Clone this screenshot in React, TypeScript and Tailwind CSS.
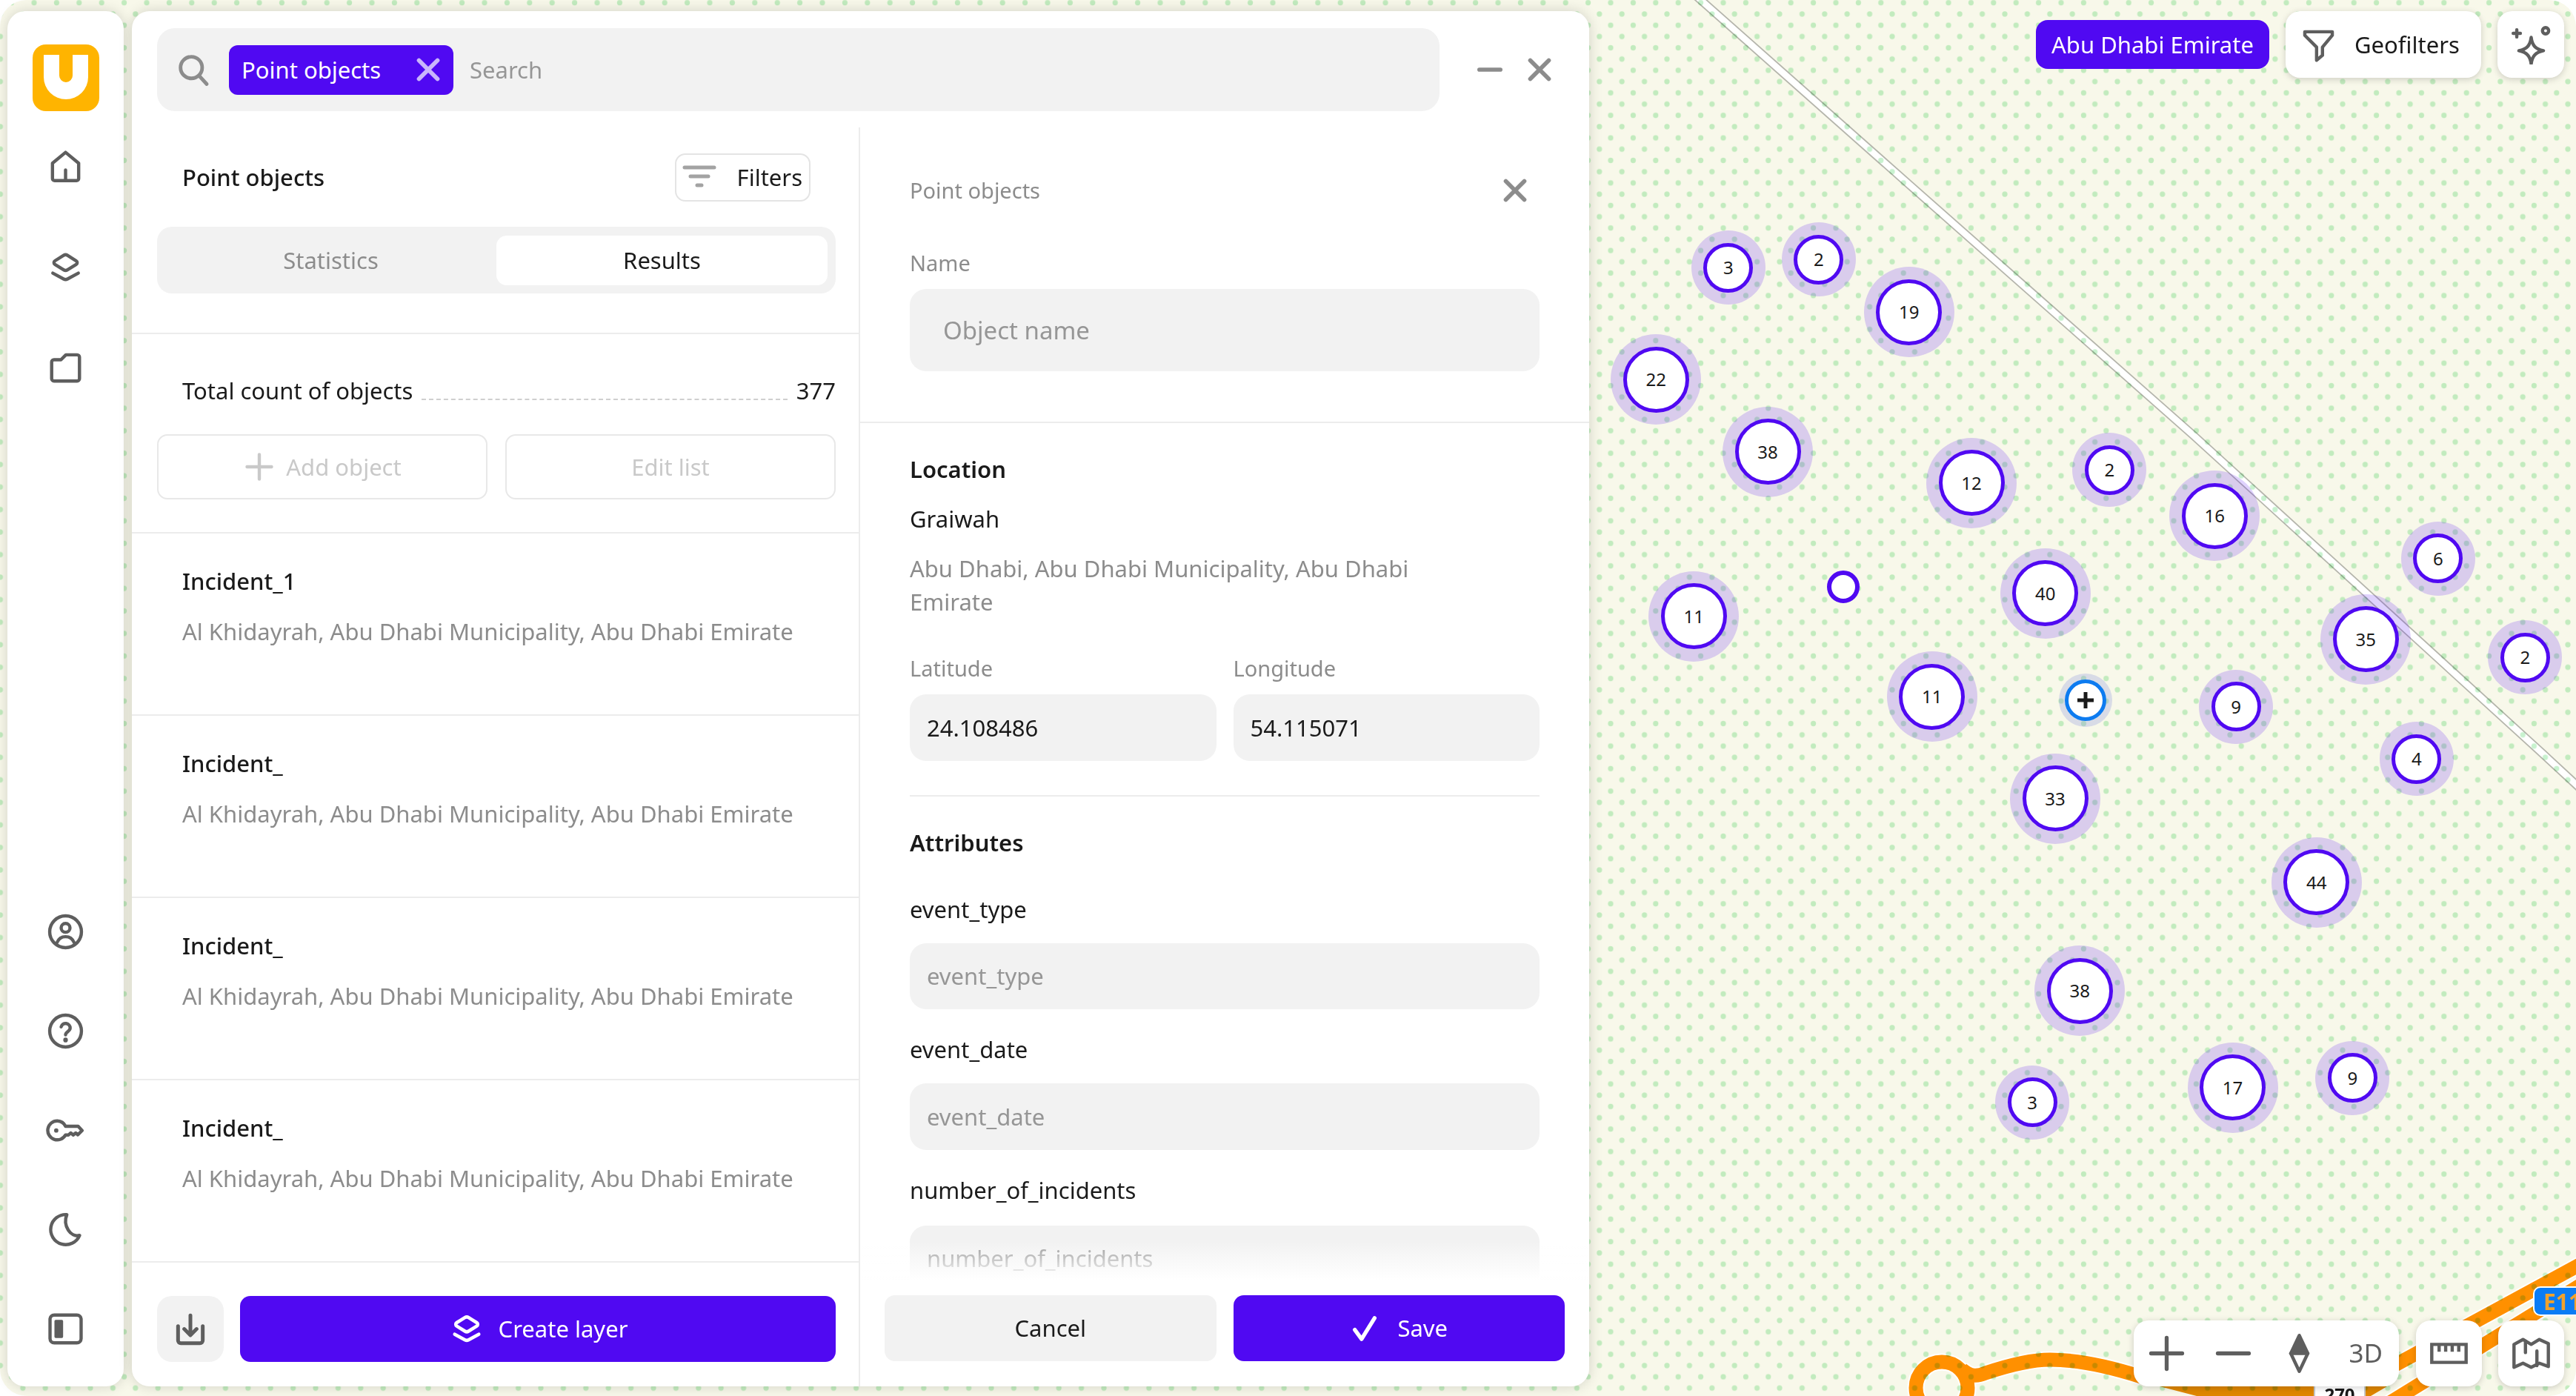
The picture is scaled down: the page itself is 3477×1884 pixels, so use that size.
import React from "react";

const PURPLE = "#5009f2";

type Cluster = [number, number, string, "L" | "S"];
const clusters: Cluster[] = [
  [1052, 163, "3", "S"], [1107, 158, "2", "S"], [1162, 190, "19", "L"], [1008, 231, "22", "L"],
  [1076, 275, "38", "L"], [1200, 294, "12", "L"], [1284, 286, "2", "S"], [1348, 314, "16", "L"],
  [1484, 340, "6", "S"], [1245, 361, "40", "L"], [1031, 375, "11", "L"], [1440, 389, "35", "L"],
  [1537, 400, "2", "S"], [1176, 424, "11", "L"], [1361, 430, "9", "S"], [1471, 462, "4", "S"],
  [1251, 486, "33", "L"], [1410, 537, "44", "L"], [1266, 603, "38", "L"], [1359, 662, "17", "L"],
  [1432, 656, "9", "S"], [1237, 671, "3", "S"],
];
const K = 2.2175;

function Svg({ size = 53, className = "", children, sw = 2, color = "#5e5e5e" }: { size?: number; className?: string; children: React.ReactNode; sw?: number; color?: string }) {
  return (
    <svg width={size} height={size} viewBox="0 0 24 24" fill="none" stroke={color} strokeWidth={sw} strokeLinecap="round" strokeLinejoin="round" className={"shrink-0 " + className}>
      {children}
    </svg>
  );
}

const LayersPaths = () => (
  <>
    <path d="M10.8 4.4a2.2 2.2 0 0 1 2.4 0l5.3 3.3a1.3 1.3 0 0 1 0 2.2L13.2 13.2a2.2 2.2 0 0 1-2.4 0L5.5 9.9a1.3 1.3 0 0 1 0-2.2z" />
    <path d="M4.2 15.2l6.6 3.6a2.5 2.5 0 0 0 2.4 0l6.6-3.6" />
  </>
);

const XIcon = ({ color = "#8c8c8c", size = 40 }: { color?: string; size?: number }) => (
  <Svg size={size} color={color} sw={3.4}>
    <path d="M4.5 4.5l15 15M19.5 4.5l-15 15" />
  </Svg>
);

function NavButton({ children }: { children: React.ReactNode }) {
  return <div className="flex h-[89px] w-[89px] items-center justify-center">{children}</div>;
}

function Input({ text, dark, h = "h-[89.5px]", pad = "px-[23px]", big }: { text: string; dark?: boolean; h?: string; pad?: string; big?: boolean }) {
  return (
    <div className={`flex items-center rounded-[22px] bg-[#f2f2f2] ${h} ${pad} ${big ? "text-[33px]" : "text-[31px]"} ${dark ? "text-[#1a1a1a]" : "text-[#969696]"}`}>
      {text}
    </div>
  );
}

function ListItem({ title }: { title: string }) {
  return (
    <div className="h-[246px] border-b-2 border-[#ececec] pl-[68px] pr-[65px] pt-[42px]">
      <div className="text-[31px] font-medium leading-[45px] text-[#1a1a1a]">{title}</div>
      <div className="mt-[23px] text-[31px] leading-[45px] text-[#8c8c8c]">Al Khidayrah, Abu Dhabi Municipality, Abu Dhabi Emirate</div>
    </div>
  );
}

function MapCanvas() {
  return (
    <div className="absolute inset-0 overflow-hidden rounded-[36px] bg-[#f8f8ea]">
      <svg width={3477} height={1884} className="absolute inset-0">
        <defs>
          <pattern id="dots" width="30.4" height="30.4" patternUnits="userSpaceOnUse" patternTransform="translate(0.4 18.9)">
            <circle cx="0" cy="0" r="3.6" fill="#c8f2cf" />
            <circle cx="30.4" cy="0" r="3.6" fill="#c8f2cf" />
            <circle cx="0" cy="30.4" r="3.6" fill="#c8f2cf" />
            <circle cx="30.4" cy="30.4" r="3.6" fill="#c8f2cf" />
            <circle cx="15.2" cy="15.2" r="3.6" fill="#c8f2cf" />
          </pattern>
        </defs>
        {/* motorway */}
        <path d="M2290 -5L2578 250L2960 587L3433 1018L3500 1080" fill="none" stroke="#b5b5ac" strokeWidth="12" />
        <path d="M2290 -5L2578 250L2960 587L3433 1018L3500 1080" fill="none" stroke="#ffffff" strokeWidth="8.5" />
        {/* orange roads */}
        <g fill="none" stroke="#ffffff" strokeWidth="23">
          <circle cx="2621" cy="1873" r="35" />
          <path d="M2648 1848C2660 1858 2668 1858 2680 1853C2710 1843 2740 1835 2767 1835C2800 1835 2840 1842 2890 1858" />
          <path d="M3200 1860L3500 1697" />
          <path d="M3190 1915L3500 1724" />
        </g>
        <g fill="none" stroke="#ff9000" strokeWidth="19">
          <circle cx="2621" cy="1873" r="35" />
          <path d="M2648 1848C2660 1858 2668 1858 2680 1853C2710 1843 2740 1835 2767 1835C2800 1835 2840 1842 2890 1858" />
          <path d="M3200 1860L3500 1697" />
          <path d="M3190 1915L3500 1724" />
        </g>
        <path d="M2915 1871H3222L3200 1884H2965Z" fill="#df8600" />
        <rect x="0" y="0" width="3477" height="1884" fill="url(#dots)" className="mix-blend-multiply" />
      </svg>
      <div className="absolute left-[3419px] top-[1736px] flex h-[40px] w-[70px] items-center rounded-[10px] border-2 border-white bg-[#0a7cf5] pl-[12px] text-[30px] font-bold text-[#f2a22c]">E11</div>
      <div className="absolute left-[3123px] top-[1860px] flex h-[40px] w-[70px] items-start justify-center rounded-[10px] border-2 border-[#c8c8c8] bg-white pt-[2px] text-[24px] font-bold text-[#1a1a1a]">270</div>
      {clusters.map(([x, y, label, kind], i) => {
        const outer = kind === "L" ? 122 : 100;
        return (
          <div
            key={i}
            className="absolute flex items-center justify-center rounded-full bg-[rgba(80,9,242,0.185)]"
            style={{ left: x * K - outer / 2, top: y * K - outer / 2, width: outer, height: outer }}
          >
            <div className={`flex items-center justify-center rounded-full border-[5.5px] border-[#5009f2] bg-white text-[24px] text-[#1a1a1a] ${kind === "L" ? "h-[89px] w-[89px]" : "h-[67px] w-[67px]"}`}>
              {label}
            </div>
          </div>
        );
      })}
      <div className="absolute left-[2465.5px] top-[770px] h-[44px] w-[44px] rounded-full border-[6px] border-[#5009f2] bg-white" />
      <div className="absolute left-[2778.5px] top-[908.5px] flex h-[72px] w-[72px] items-center justify-center rounded-full bg-[rgba(120,130,220,0.25)]">
        <div className="flex h-[56px] w-[56px] items-center justify-center rounded-full border-[5px] border-[#0d7bf0] bg-white">
          <svg width="24" height="24" viewBox="0 0 24 24" stroke="#1a1a1a" strokeWidth="5" strokeLinecap="butt">
            <path d="M12 1v22M1 12h22" />
          </svg>
        </div>
      </div>
    </div>
  );
}

export default function App() {
  return (
    <div className="relative h-[1884px] w-[3477px] overflow-hidden bg-white font-['Noto_Sans',sans-serif] text-[#1a1a1a]">
      <MapCanvas />
      <div className="relative flex h-full pb-[13px] pl-[10px] pt-[15px]">
        {/* nav rail */}
        <nav className="flex w-[157px] shrink-0 flex-col items-center rounded-[24px] bg-white pb-[33px] pt-[45px] shadow-[0_0_18px_rgba(0,0,0,0.16)]">
          <svg width="90" height="90" viewBox="0 0 90 90">
            <rect width="90" height="90" rx="18" fill="#ffb400" />
            <path d="M15 14H36V42a9 9 0 0 0 18 0V14H75V44a30 30 0 0 1-60 0Z" fill="#fff" />
          </svg>
          <div className="mt-[31px] flex flex-col gap-[46.5px]">
            <NavButton>
              <Svg><path d="M12 3l8 6.6V19a1.3 1.3 0 0 1-1.3 1.3H5.3A1.3 1.3 0 0 1 4 19V9.6z" /><path d="M12 20v-6.2" /></Svg>
            </NavButton>
            <NavButton><Svg><LayersPaths /></Svg></NavButton>
            <NavButton>
              <Svg><path d="M3.5 8.4A1.4 1.4 0 0 1 4.9 7H9.2l3-3h6.9a1.4 1.4 0 0 1 1.4 1.4v13.2a1.4 1.4 0 0 1-1.4 1.4H4.9a1.4 1.4 0 0 1-1.4-1.4z" /></Svg>
            </NavButton>
          </div>
          <div className="mt-auto flex flex-col gap-[45px]">
            <NavButton>
              <Svg><circle cx="12" cy="12" r="9.7" /><circle cx="12" cy="9.6" r="2.7" /><path d="M6.8 18.6c1-2.6 3-3.6 5.2-3.6s4.2 1 5.2 3.6" /></Svg>
            </NavButton>
            <NavButton>
              <Svg><circle cx="12" cy="12" r="9.7" /><path d="M9.3 9.4a2.8 2.8 0 0 1 5.5.8c0 2-2.8 2.2-2.8 4.1" /><path d="M12 17.4v.1" strokeWidth="2.8" /></Svg>
            </NavButton>
            <NavButton>
              <Svg><path d="M7 6.2a5.8 5.8 0 1 0 5 8.6h1.8l1.4-1.2 1.5 1.2 1.5-1.2 1.3 1.1 2.6-2.6-2.4-2.6H12a5.8 5.8 0 0 0-5-3.3z" /><path d="M6.3 12v.1" strokeWidth="2.6" /></Svg>
            </NavButton>
            <NavButton>
              <Svg><path d="M12.8 2.8a9.2 9.2 0 1 0 7.8 12.7c-5.5 1.5-10.5-6-7.8-12.7z" /></Svg>
            </NavButton>
            <NavButton>
              <Svg><rect x="2.5" y="3.5" width="19" height="17" rx="2.6" /><rect x="5.2" y="6.4" width="5.3" height="11.2" rx="0.8" fill="#5e5e5e" stroke="none" /></Svg>
            </NavButton>
          </div>
        </nav>

        {/* panel */}
        <section className="ml-[11px] flex w-[1967px] shrink-0 flex-col rounded-[24px] bg-white shadow-[0_0_18px_rgba(0,0,0,0.16)]">
          <header className="flex items-center pl-[34px] pt-[23px]">
            <div className="flex h-[112px] w-[1731px] items-center rounded-[24px] bg-[#f2f2f2] pl-[22px]">
              <Svg color="#8c8c8c" sw={2.2}><circle cx="11" cy="10.5" r="6.6" /><path d="M15.8 15.6l4.6 5" /></Svg>
              <div className="ml-[22px] flex h-[67px] w-[303px] items-center justify-between rounded-[12px] bg-[#5009f2] pl-[17px] pr-[14px] text-[31px] text-white">
                Point objects
                <XIcon color="#c9b6fb" />
              </div>
              <span className="ml-[22px] text-[31px] text-[#969696]">Search</span>
            </div>
            <div className="ml-[48px] flex items-center gap-[27px]">
              <Svg size={40} color="#8c8c8c" sw={3.4}><path d="M3.5 12h17" /></Svg>
              <XIcon />
            </div>
          </header>

          <div className="mt-[22px] flex min-h-0 flex-1">
            {/* left column */}
            <div className="flex w-[983px] shrink-0 flex-col border-r-2 border-[#ececec]">
              <div className="border-b-2 border-[#ececec] pl-[34px] pr-[31px] pb-[53px] pt-[35px]">
                <div className="flex items-center justify-between pl-[34px] pr-[34px]">
                  <span className="text-[31px] font-medium">Point objects</span>
                  <div className="flex h-[65px] w-[183px] items-center justify-between rounded-[14px] border-2 border-[#e4e4e4] pl-[8px] pr-[9px] text-[31px]">
                    <svg width="46" height="46" viewBox="0 0 46 46" fill="none" stroke="#a3a3a3" strokeWidth="5" strokeLinecap="round"><path d="M3 9h40M11 21h24M20 33h6" /></svg>
                    Filters
                  </div>
                </div>
                <div className="mt-[34px] flex h-[90px] items-center rounded-[20px] bg-[#f2f2f2] pl-[11px] pr-[11px] text-[31px]">
                  <div className="flex-1 text-center text-[#8c8c8c]">Statistics</div>
                  <div className="flex h-[67px] w-[447px] items-center justify-center rounded-[14px] bg-white">Results</div>
                </div>
              </div>
              <div className="border-b-2 border-[#ececec] pb-[44px] pl-[34px] pr-[31px] pt-[54px]">
                <div className="flex items-end pl-[34px] text-[31px] leading-[45px]">
                  <span>Total count of objects</span>
                  <span className="mx-[12px] mb-[10px] flex-1 border-b-2 border-dashed border-[#cfcfcf]" />
                  <span>377</span>
                </div>
                <div className="mt-[36px] flex gap-[24px] text-[31px] text-[#c9c9c9]">
                  <div className="flex h-[88px] w-[446px] items-center justify-center gap-[14px] rounded-[14px] border-2 border-[#e8e8e8]">
                    <Svg size={44} color="#c9c9c9" sw={2.4}><path d="M12 3v18M3 12h18" /></Svg>
                    Add object
                  </div>
                  <div className="flex h-[88px] flex-1 items-center justify-center rounded-[14px] border-2 border-[#e8e8e8]">Edit list</div>
                </div>
              </div>
              <ListItem title="Incident_1" />
              <ListItem title="Incident_" />
              <ListItem title="Incident_" />
              <ListItem title="Incident_" />
              <div className="flex gap-[22.5px] pl-[34px] pr-[31px] pt-[45px]">
                <div className="flex h-[89px] w-[89.5px] items-center justify-center rounded-[20px] bg-[#f2f2f2]">
                  <Svg size={50} sw={2.4}><path d="M4 10v9.2A1.8 1.8 0 0 0 5.8 21h12.4a1.8 1.8 0 0 0 1.8-1.8V10" /><path d="M12 3v12.5M8 11.8l4 4 4-4" /></Svg>
                </div>
                <div className="flex h-[89px] flex-1 items-center justify-center gap-[18px] rounded-[14px] bg-[#5009f2] text-[31px] text-white">
                  <Svg color="#ffffff" sw={2.2} size={50}><LayersPaths /></Svg>
                  Create layer
                </div>
              </div>
            </div>

            {/* right column */}
            <div className="flex min-w-0 flex-1 flex-col">
              <div className="relative min-h-0 flex-1 overflow-hidden">
                <div className="border-b-2 border-[#ececec] px-[67px] pb-[68px] pt-[65px]">
                  <div className="flex h-[40px] items-center justify-between pr-[13px] text-[29px] text-[#8c8c8c]">
                    Point objects
                    <XIcon />
                  </div>
                  <div className="mt-[58px] text-[29px] leading-[40px] text-[#8c8c8c]">Name</div>
                  <div className="mt-[15px]"><Input text="Object name" h="h-[111px]" pad="px-[45px]" big /></div>
                </div>
                <div className="px-[67px] pt-[40px]">
                  <div className="text-[31px] font-semibold leading-[45px]">Location</div>
                  <div className="mt-[22px] text-[31px] leading-[45px]">Graiwah</div>
                  <div className="mt-[22px] pr-[60px] text-[31px] leading-[45px] text-[#8c8c8c]">Abu Dhabi, Abu Dhabi Municipality, Abu Dhabi Emirate</div>
                  <div className="mt-[47px] grid grid-cols-2 gap-x-[23px]">
                    <div>
                      <div className="text-[29px] leading-[40px] text-[#8c8c8c]">Latitude</div>
                      <div className="mt-[15px]"><Input text="24.108486" dark /></div>
                    </div>
                    <div>
                      <div className="text-[29px] leading-[40px] text-[#8c8c8c]">Longitude</div>
                      <div className="mt-[15px]"><Input text="54.115071" dark /></div>
                    </div>
                  </div>
                  <div className="mt-[46px] border-t-2 border-[#ececec]" />
                  <div className="mt-[40px] text-[31px] font-semibold leading-[45px]">Attributes</div>
                  <div className="mt-[45px] text-[31px] leading-[45px]">event_type</div>
                  <div className="mt-[23px]"><Input text="event_type" /></div>
                  <div className="mt-[32px] text-[31px] leading-[45px]">event_date</div>
                  <div className="mt-[23px]"><Input text="event_date" /></div>
                  <div className="mt-[32px] text-[31px] leading-[45px]">number_of_incidents</div>
                  <div className="mt-[25px]"><Input text="number_of_incidents" /></div>
                </div>
                <div className="absolute bottom-0 left-0 right-0 h-[52px] bg-gradient-to-b from-white/0 to-white" />
              </div>
              <div className="flex gap-[23px] px-[33px] pb-[34px] pt-[21px] text-[31px]">
                <div className="flex h-[89px] flex-1 items-center justify-center rounded-[14px] bg-[#f2f2f2]">Cancel</div>
                <div className="flex h-[89px] flex-1 items-center justify-center gap-[24px] rounded-[14px] bg-[#5009f2] text-white">
                  <Svg size={40} color="#ffffff" sw={3.2}><path d="M4 13l5.5 7.5L20 3.5" /></Svg>
                  Save
                </div>
              </div>
            </div>
          </div>
        </section>

        {/* map controls */}
        <div className="flex min-w-0 flex-1 flex-col justify-between pr-[16px]">
          <div className="flex items-start justify-end gap-[22px]">
            <div className="mt-[12px] flex h-[66px] w-[315px] items-center justify-center rounded-[16px] bg-[#5009f2] text-[31px] text-white">Abu Dhabi Emirate</div>
            <div className="flex h-[90px] w-[264px] items-center gap-[22px] rounded-[20px] bg-white pl-[18px] text-[31px] shadow-[0_2px_10px_rgba(0,0,0,0.18)]">
              <Svg><path d="M3.6 4h16.8v2.2l-6 7.2v5l-3.6 3v-8L3.6 6.2z" /></Svg>
              Geofilters
            </div>
            <div className="flex h-[90px] w-[90px] items-center justify-center rounded-[20px] bg-white shadow-[0_2px_10px_rgba(0,0,0,0.18)]">
              <Svg>
                <path d="M12 7.5c.6 4.800 2.600 7.200 7.500 8.100-4.900 1-6.900 3.200-7.500 8-.6-4.800-2.600-7-7.500-8 4.900-.9 6.900-3.300 7.500-8.100z" />
                <circle cx="20.800" cy="3.400" r="1.900" />
                <path d="M3.200 2.800v4.400M1 5h4.400" />
              </Svg>
            </div>
          </div>
          <div className="flex justify-end gap-[22.5px]">
            <div className="flex h-[89px] w-[358px] items-center rounded-[20px] bg-white text-[#5e5e5e] shadow-[0_2px_10px_rgba(0,0,0,0.18)]">
              <div className="flex h-full w-[89.500px] items-center justify-center"><Svg sw={2.400}><path d="M12 2.500v19M2.500 12h19" /></Svg></div>
              <div className="flex h-full w-[89.500px] items-center justify-center"><Svg sw={2.400}><path d="M2.500 12h19" /></Svg></div>
              <div className="flex h-full w-[89.500px] items-center justify-center">
                <Svg>
                  <path d="M12 1L6.800 12h10.400z" fill="#5e5e5e" />
                  <path d="M6.800 12L12 23l5.200-11" strokeWidth="2" />
                </Svg>
              </div>
              <div className="flex h-full w-[89.500px] items-center justify-center text-[35px]">3D</div>
            </div>
            <div className="flex h-[89px] w-[89px] items-center justify-center rounded-[20px] bg-white shadow-[0_2px_10px_rgba(0,0,0,0.18)]">
              <Svg sw={2} strokeLinecap="butt" {...({} as object)}>
                <path d="M1.500 6.500h21v11h-21z" strokeLinejoin="miter" />
                <path d="M6 7v4M10 7v4M14 7v4M18 7v4" strokeLinecap="butt" />
              </Svg>
            </div>
            <div className="flex h-[89px] w-[89px] items-center justify-center rounded-[20px] bg-white shadow-[0_2px_10px_rgba(0,0,0,0.18)]">
              <Svg>
                <path d="M1.500 6.500L7 3.500 12 6.500l5-3 5.500 2.500v14L17 18l-5 2.500-5-2.500-5.500 2.500z" />
                <path d="M8.500 4.500v7M15.500 10.500v9" />
              </Svg>
            </div>
          </div>
        </div>
      </div>
    </div>
  );
}
